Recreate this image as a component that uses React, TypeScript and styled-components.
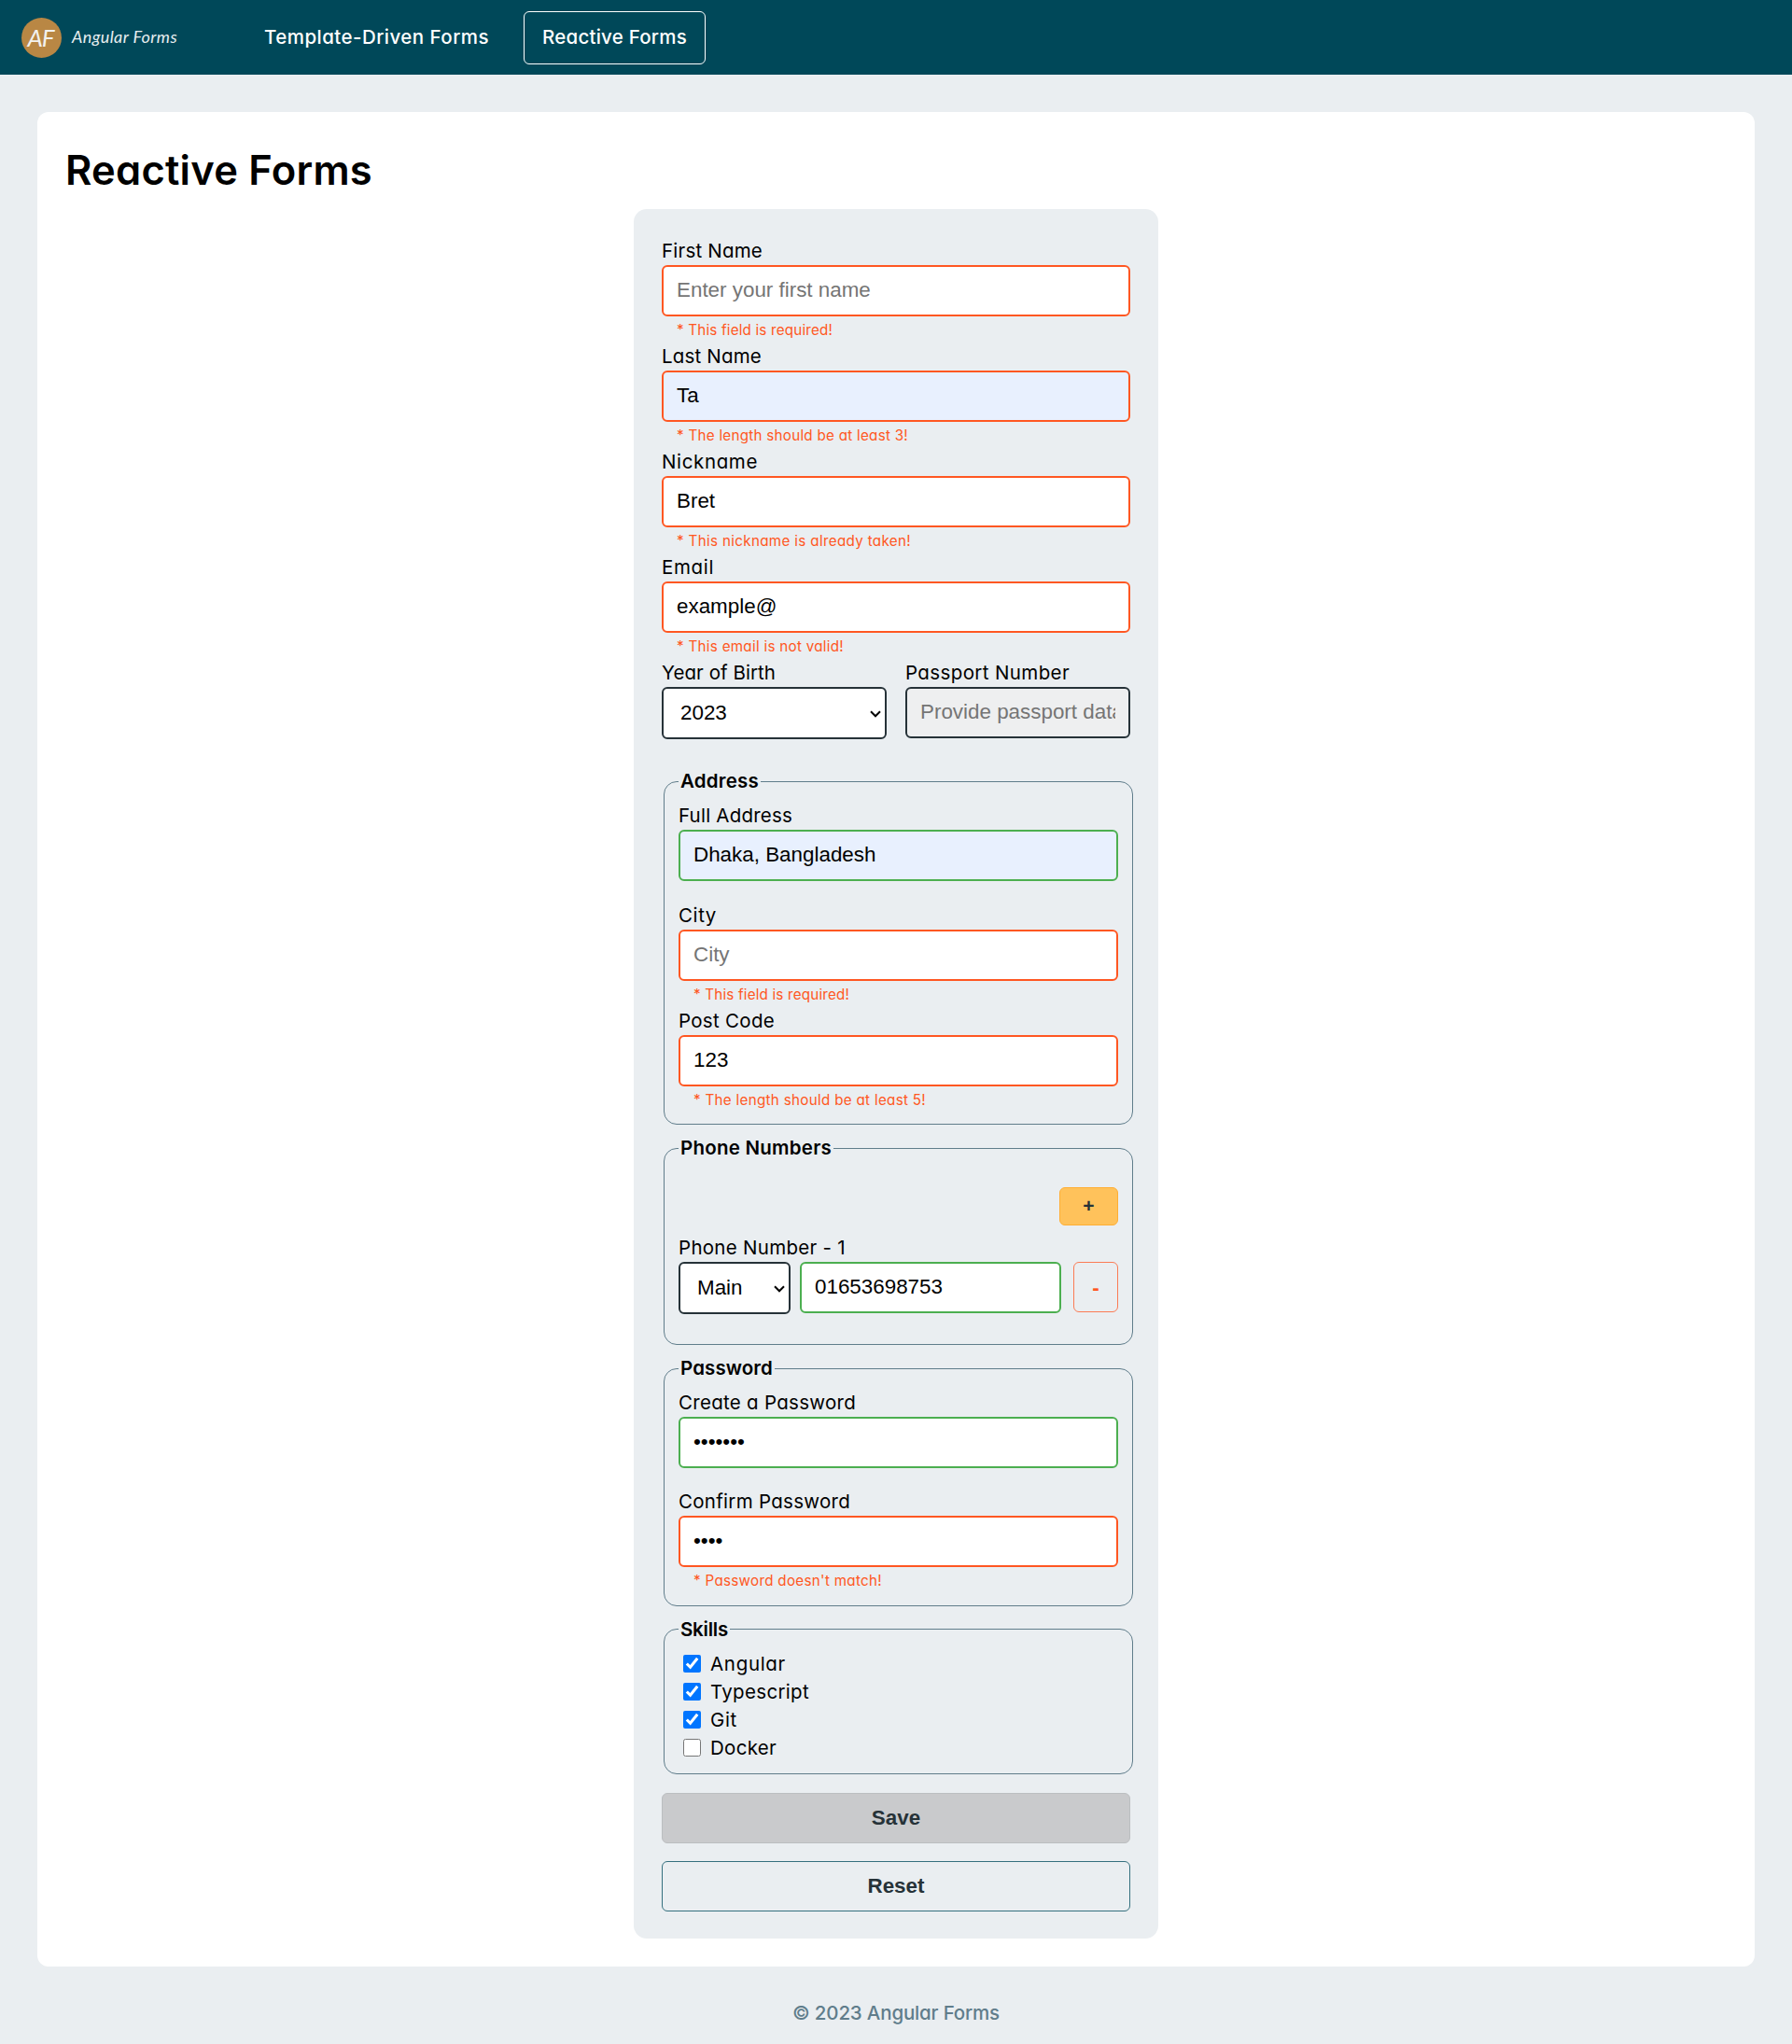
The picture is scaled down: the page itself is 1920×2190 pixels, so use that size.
import React, { useLayoutEffect, useRef, useState } from 'react';
import styled, { createGlobalStyle } from 'styled-components';

type Status = 'valid' | 'invalid' | 'idle';

const color = {
  teal: '#004859',
  page: '#eaeef1',
  slate: '#607d8b',
  ink: '#263238',
  error: '#ff5722',
  success: '#4caf50',
};

const sans = `'Inter', 'Open Sans', sans-serif`;
const control = `'Liberation Sans', Arial, sans-serif`;

const borderOf = (status: Status) =>
  status === 'valid' ? color.success : status === 'invalid' ? color.error : color.ink;

const GlobalStyle = createGlobalStyle`
  *, *::before, *::after { box-sizing: border-box; }
  body {
    margin: 0;
    background: ${color.page};
    color: #000;
    font: 400 20.5px/30px ${sans};
    font-feature-settings: 'cv11' 1;
  }
`;

const Header = styled.header`
  display: flex;
  align-items: center;
  height: 80px;
  padding-left: 23px;
  background: ${color.teal};
`;

const Brand = styled.a`
  display: flex;
  align-items: center;
  gap: 11px;
  width: 240px;
  color: #e8eef0;
  font: italic 400 18px/28px 'Lato', sans-serif;
`;

const Monogram = styled.span`
  display: flex;
  align-items: center;
  justify-content: center;
  width: 43px;
  height: 43px;
  padding-right: 2px;
  border-radius: 50%;
  background: #b98744;
  color: #f2f1ee;
  font-size: 26px;
  font-weight: 400;
  letter-spacing: -1px;
`;

const BrandName = styled.span`
  padding-bottom: 3px;
`;

const Nav = styled.nav`
  display: flex;
  gap: 17px;
`;

const NavLink = styled.a<{ $active?: boolean }>`
  display: flex;
  align-items: center;
  height: 57px;
  padding: 0 19px;
  border: 1px solid ${(p) => (p.$active ? '#fff' : 'transparent')};
  border-radius: 6px;
  color: #fff;
  font-weight: 500;
`;

const Card = styled.main`
  margin: 40px;
  margin-bottom: 0;
  height: 1987px;
  padding: 30px;
  border-radius: 12px;
  background: #fff;
`;

const Title = styled.h1`
  height: 74px;
  margin: 0;
  font-size: 43.5px;
  font-weight: 600;
  line-height: 64px;
`;

const Form = styled.form`
  width: 562px;
  height: 1853px;
  margin: 0 auto;
  padding: 30px;
  border-radius: 14px;
  background: ${color.page};
`;

const FieldBox = styled.div<{ $gap: number }>`
  display: flex;
  flex-direction: column;
  padding-bottom: ${(p) => p.$gap}px;
`;

const Label = styled.label`
  height: 30px;
`;

const Input = styled.input<{ $status: Status; $autofilled?: boolean }>`
  width: 100%;
  min-width: 0;
  height: 55px;
  padding: 0 14px 1px;
  border: 2px solid ${(p) => borderOf(p.$status)};
  border-radius: 6px;
  outline: none;
  background: ${(p) => (p.$autofilled ? '#e8f0fe' : '#fff')};
  color: #000;
  font: 400 22.4px ${control};
  &::placeholder { color: #757575; }
  &:disabled { background: #eeeff0; }
`;

/* The arrow shares the select's grid cell, aligned to its end. */
const SelectBox = styled.div`
  display: grid;
  align-items: center;
  & > * { grid-area: 1 / 1; }
`;

const Arrow = styled.svg`
  justify-self: end;
  width: 12px;
  height: 8px;
  margin: 2px 6px 0 0;
  pointer-events: none;
`;

const NativeSelect = styled.select`
  appearance: none;
  width: 100%;
  height: 56px;
  padding: 0 0 1px 18px;
  border: 2px solid ${color.ink};
  border-radius: 6px;
  background: #fff;
  color: #000;
  font: 400 22.4px ${control};
`;

function Select({ value }: { value: string }) {
  return (
    <SelectBox>
      <NativeSelect defaultValue={value}><option>{value}</option></NativeSelect>
      <Arrow viewBox="0 0 12 8" fill="none" stroke="#000" strokeWidth="2">
        <path d="M1 1.3 6 6.3 11 1.3" />
      </Arrow>
    </SelectBox>
  );
}

const ErrorText = styled.span`
  height: 28px;
  padding-left: 16px;
  color: ${color.error};
  font-size: 15.2px;
  line-height: 30px;
`;

const Columns = styled.div`
  display: grid;
  grid-template-columns: 1fr 1fr;
  gap: 20px;
  height: 116px;
`;

const Group = styled.fieldset`
  width: 503px;
  margin: 0 2px 10px;
  padding: 7px 15px 12.5px;
  border: 1px solid ${color.slate};
  border-radius: 14px;
`;

const Legend = styled.legend`
  height: 30px;
  padding: 0 2px;
  font-weight: 600;
`;

const Button = styled.button`
  display: block;
  border: 1px solid;
  border-radius: 6px;
  color: ${color.ink};
  font: 700 22.4px ${control};
`;

const AddButton = styled(Button)`
  width: 63px;
  height: 41px;
  margin: 20px 0 9px auto;
  padding: 0 0 2px;
  border-color: #ffae34;
  background: #ffc25b;
  font-size: 21px;
`;

const RemoveButton = styled(Button)`
  width: 48px;
  height: 54px;
  margin-left: auto;
  padding: 2px 0 0;
  border-color: #fb7c55;
  background: transparent;
  color: ${color.error};
`;

const PhoneRow = styled.div`
  display: grid;
  grid-template-columns: 120px 280px 1fr;
  column-gap: 10px;
  align-items: start;
  height: 75.5px;
`;

const WideButton = styled(Button)<{ $muted?: boolean }>`
  width: 100%;
  height: 54px;
  margin-bottom: 19px;
  padding: 0 0 1px;
  border-color: ${(p) => (p.$muted ? '#bbbec0' : '#35707e')};
  background: ${(p) => (p.$muted ? '#c9cacc' : 'transparent')};
`;

const Actions = styled.div`
  padding-top: 10px;
`;

const Skill = styled.label`
  display: flex;
  align-items: center;
  gap: 10px;
  height: 30px;
  padding-left: 5px;
`;

const Checkbox = styled.input`
  width: 19px;
  height: 19px;
  margin: 0;
  accent-color: #0075ff;
`;

const Footer = styled.footer`
  padding-top: 35px;
  color: ${color.slate};
  font-weight: 500;
  text-align: center;
`;

const Run = styled.span`
  display: inline-block;
  white-space: nowrap;
`;

/** Tracks its text so the line takes the given width. */
function Tracked({ w, children }: { w: number; children: string }) {
  const ref = useRef<HTMLSpanElement>(null);
  const [spacing, setSpacing] = useState(0);
  useLayoutEffect(() => {
    if (ref.current) {
      const natural = ref.current.getBoundingClientRect().width;
      setSpacing((w - natural) / children.length);
    }
  }, [w, children]);
  return <Run ref={ref} style={{ letterSpacing: spacing }}>{children}</Run>;
}

type FieldProps = {
  label: string;
  w: number;
  status?: Status;
  value?: string;
  placeholder?: string;
  type?: string;
  autofilled?: boolean;
  disabled?: boolean;
  error?: [string, number];
  gap?: number;
};

function Field({ label, w, status = 'idle', value, placeholder, type = 'text', autofilled, disabled, error, gap = 0 }: FieldProps) {
  return (
    <FieldBox $gap={gap}>
      <Label><Tracked w={w}>{label}</Tracked></Label>
      <Input
        type={type}
        $status={status}
        $autofilled={autofilled}
        defaultValue={value}
        placeholder={placeholder}
        disabled={disabled}
        autoComplete="off"
        spellCheck={false}
      />
      {error && <ErrorText><Tracked w={error[1]}>{error[0]}</Tracked></ErrorText>}
    </FieldBox>
  );
}

const skills: { name: string; w: number; checked: boolean }[] = [
  { name: 'Angular', w: 81, checked: true },
  { name: 'Typescript', w: 106, checked: true },
  { name: 'Git', w: 29, checked: true },
  { name: 'Docker', w: 71, checked: false },
];

export default function App() {
  return (
    <>
      <GlobalStyle />
      <Header>
        <Brand>
          <Monogram>AF</Monogram>
          <BrandName><Tracked w={113}>Angular Forms</Tracked></BrandName>
        </Brand>
        <Nav>
          <NavLink><Tracked w={241}>Template-Driven Forms</Tracked></NavLink>
          <NavLink $active><Tracked w={155}>Reactive Forms</Tracked></NavLink>
        </Nav>
      </Header>

      <Card>
        <Title><Tracked w={329}>Reactive Forms</Tracked></Title>
        <Form>
          <Field label="First Name" w={108} status="invalid" placeholder="Enter your first name" error={['* This field is required!', 167]} />
          <Field label="Last Name" w={107} status="invalid" value="Ta" autofilled error={['* The length should be at least 3!', 248]} />
          <Field label="Nickname" w={103} status="invalid" value="Bret" error={['* This nickname is already taken!', 251]} />
          <Field label="Email" w={56} status="invalid" value="example@" error={['* This email is not valid!', 179]} />
          <Columns>
            <FieldBox $gap={0}>
              <Label><Tracked w={122}>Year of Birth</Tracked></Label>
              <Select value="2023" />
            </FieldBox>
            <Field label="Passport Number" w={176} placeholder="Provide passport data" disabled />
          </Columns>

          <Group>
            <Legend><Tracked w={84}>Address</Tracked></Legend>
            <Field label="Full Address" w={122} status="valid" value="Dhaka, Bangladesh" autofilled gap={21.5} />
            <Field label="City" w={41} status="invalid" placeholder="City" error={['* This field is required!', 167]} />
            <Field label="Post Code" w={103} status="invalid" value="123" error={['* The length should be at least 5!', 249]} />
          </Group>

          <Group>
            <Legend><Tracked w={162}>Phone Numbers</Tracked></Legend>
            <AddButton type="button">+</AddButton>
            <Label><Tracked w={179}>Phone Number - 1</Tracked></Label>
            <PhoneRow>
              <Select value="Main" />
              <Input $status="valid" defaultValue="01653698753" />
              <RemoveButton type="button">-</RemoveButton>
            </PhoneRow>
          </Group>

          <Group>
            <Legend><Tracked w={99}>Password</Tracked></Legend>
            <Field label="Create a Password" w={190} status="valid" type="password" value="angular" gap={21} />
            <Field label="Confirm Password" w={184} status="invalid" type="password" value="angu" error={["* Password doesn't match!", 202]} />
          </Group>

          <Group>
            <Legend><Tracked w={51}>Skills</Tracked></Legend>
            {skills.map((s) => (
              <Skill key={s.name}>
                <Checkbox type="checkbox" defaultChecked={s.checked} />
                <Tracked w={s.w}>{s.name}</Tracked>
              </Skill>
            ))}
          </Group>

          <Actions>
            <WideButton type="button" $muted>Save</WideButton>
            <WideButton type="button">Reset</WideButton>
          </Actions>
        </Form>
      </Card>

      <Footer><Tracked w={222}>© 2023 Angular Forms</Tracked></Footer>
    </>
  );
}
